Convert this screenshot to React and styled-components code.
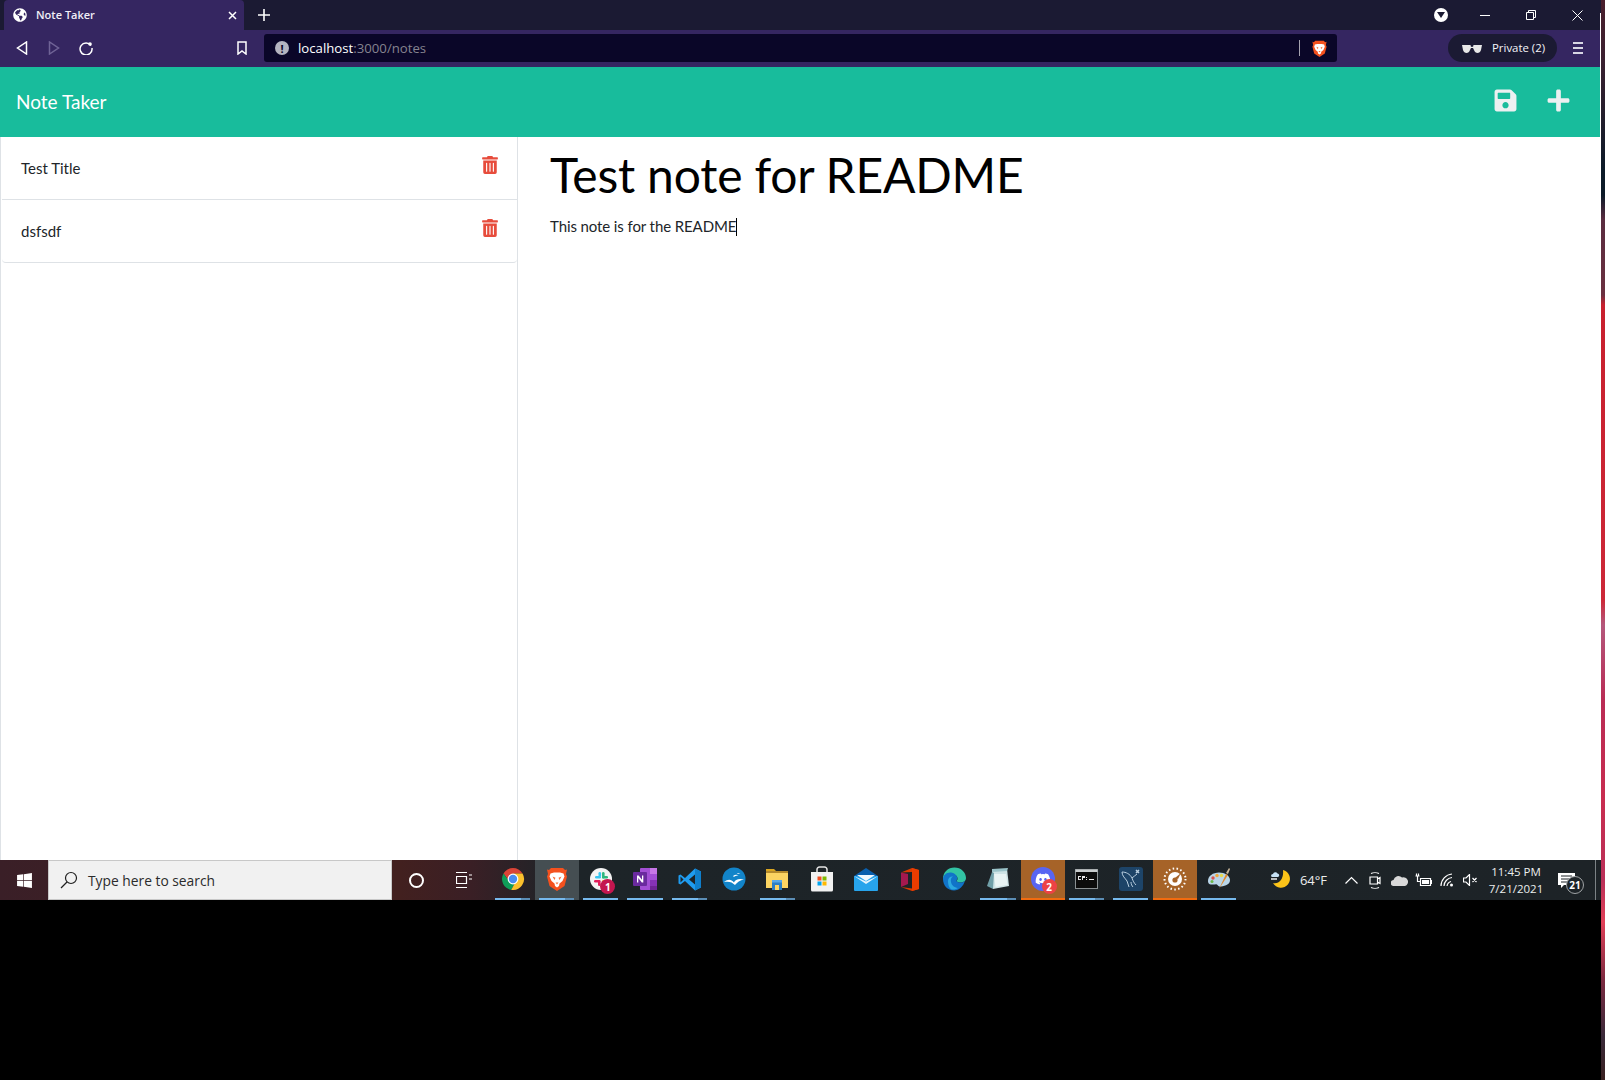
import styled, { createGlobalStyle } from 'styled-components';
import { FaSave, FaPlus, FaTrashAlt, FaGlobeAmericas, FaDiscord, FaWindows } from 'react-icons/fa';

const GlobalStyle = createGlobalStyle`
  html, body {
    margin: 0;
    padding: 0;
    height: 1080px;
    overflow: hidden;
    background: #000;
    font-family: Lato, "Open Sans", sans-serif;
  }
`;

const notes = [
  { id: 1, title: 'Test Title' },
  { id: 2, title: 'dsfsdf' },
];

const ChromeIcon = () => (
  <svg width="24" height="24" viewBox="0 0 24 24">
    <path d="M2.5 6.5A11 11 0 0 1 21.5 6.5L12 6.5 8 14z" fill="#db4437" />
    <path d="M2.5 6.5A11 11 0 0 0 10.2 22.9L15 14 8 14z" fill="#0f9d58" />
    <path d="M21.5 6.5A11 11 0 0 1 10.2 22.9L15.5 13 12 6.5z" fill="#fbc02d" />
    <circle cx="12" cy="12" r="5.4" fill="#fff" />
    <circle cx="12" cy="12" r="4.2" fill="#4a8cf0" />
  </svg>
);

const BraveIcon = ({ size = 24 }) => (
  <svg width={size} height={size} viewBox="0 0 24 24">
    <path d="M6 1h12l2 2 2-.5L21 7l1 2.500-2.500 9.500L12 24l-7.500-5L2 9.500 3 7 2 2.500 4 3z" fill="#f4511e" />
    <path d="M5.500 6.500L9 5.500h6l3.500 1 1 3-2 4.500-3 2.500L14 19l-2 1.500L10 19l-.5-2.500-3-2.500-2-4.500z" fill="#fff" />
    <path d="M7.500 9.500l3 1.200L9.500 13zM16.500 9.500l-3 1.200 1 2.300zM10.500 15.500h3L12 17.500z" fill="#f4703e" />
  </svg>
);

const SlackIcon = () => (
  <svg width="22" height="22" viewBox="0 0 22 22">
    <circle cx="11" cy="11" r="11" fill="#f3f3f3" />
    <rect x="5" y="8" width="6" height="2.600" rx="1.300" fill="#36c5f0" />
    <rect x="8.500" y="4" width="2.600" height="5" rx="1.300" fill="#36c5f0" />
    <rect x="12" y="4" width="2.600" height="6.500" rx="1.300" fill="#2eb67d" />
    <rect x="12" y="8" width="6" height="2.600" rx="1.300" fill="#2eb67d" />
    <rect x="4" y="12" width="6" height="2.600" rx="1.300" fill="#e01e5a" />
    <rect x="8" y="12" width="2.600" height="6" rx="1.300" fill="#e01e5a" />
    <rect x="12" y="12" width="5" height="2.600" rx="1.300" fill="#ecb22e" />
  </svg>
);

const OneNoteIcon = () => (
  <svg width="24" height="24" viewBox="0 0 24 24">
    <rect x="7" y="1" width="17" height="22" rx="1" fill="#a34fd6" />
    <rect x="17" y="1" width="7" height="6" fill="#c777e8" />
    <rect x="17" y="7" width="7" height="6" fill="#a34fd6" />
    <rect x="17" y="13" width="7" height="6" fill="#8632b5" />
    <rect x="17" y="19" width="7" height="4" fill="#6f2595" />
    <rect x="0" y="5" width="14" height="14" rx="1" fill="#6a2a9e" />
    <path d="M4 15.500v-7h1.600L9 12.700V8.500h1.300v7H8.800L5.300 11v4.500z" fill="#fff" />
  </svg>
);

const VsCodeIcon = () => (
  <svg width="24" height="25" viewBox="0 0 24 24">
    <path d="M17 1l6 3v16l-6 3L7 13.500 2.500 17 0.500 16v-8l2-1L7 10.500z" fill="#1f9cf0" />
    <path d="M17 7l-6 5 6 5z" fill="#1d2327" />
    <path d="M17 1l6 3v16l-6 3z" fill="#0f7fcc" />
    <path d="M2.500 9v6l3-3z" fill="#1d2327" />
  </svg>
);

const OpenOfficeIcon = () => (
  <svg width="24" height="24" viewBox="0 0 24 24">
    <circle cx="12" cy="12" r="11.500" fill="#1284c9" />
    <path d="M2 15c4-3 7-3 10 .5 1-3 5-4.500 10-3-4 .5-7 3-9 5.500-3-3-6-4-11-3z" fill="#fff" />
    <path d="M11 9c2-1.500 4-1.500 5.500-.5-2 0-3.500 .5-4.500 1.500zM15 6.500c1.300-.8 2.500-.7 3.500 0-1.300 0-2 .2-3 .6z" fill="#fff" />
  </svg>
);

const ExplorerIcon = () => (
  <svg width="23" height="22" viewBox="0 0 23 22">
    <path d="M0 1h8l2 2h-10z" fill="#d9a520" />
    <rect x="0" y="3" width="22" height="17" fill="#b58a2c" />
    <rect x="0" y="5" width="22" height="15" fill="#fcd462" />
    <rect x="6" y="14" width="10" height="8" fill="#2c7fc4" />
    <rect x="9" y="17" width="4" height="5" fill="#fcd462" />
    <rect x="6" y="12" width="10" height="2.500" fill="#56a8e8" />
  </svg>
);

const StoreIcon = () => (
  <svg width="24" height="26" viewBox="0 0 24 26">
    <path d="M7 6V3.500A2.500 2.500 0 0 1 9.500 1h5A2.500 2.500 0 0 1 17 3.500V6" stroke="#e4e4e4" strokeWidth="1.500" fill="none" />
    <path d="M1 6h22v18a1.500 1.500 0 0 1-1.500 1.500h-19A1.500 1.500 0 0 1 1 24z" fill="#f2f2f2" />
    <rect x="7.500" y="10.500" width="4" height="4" fill="#f25022" />
    <rect x="12.500" y="10.500" width="4" height="4" fill="#7fba00" />
    <rect x="7.500" y="15.500" width="4" height="4" fill="#00a4ef" />
    <rect x="12.500" y="15.500" width="4" height="4" fill="#ffb900" />
  </svg>
);

const MailIcon = () => (
  <svg width="24" height="23" viewBox="0 0 24 23">
    <path d="M0 8L12 0l12 8v3H0z" fill="#0a5fad" />
    <rect x="0" y="8" width="24" height="15" rx="1" fill="#27a4ec" />
    <path d="M0 8l12 8 12-8-12 5.500z" fill="#e6f4fd" />
    <path d="M3 7h18l-9 6z" fill="#f2f9fe" />
  </svg>
);

const OfficeIcon = () => (
  <svg width="18" height="23" viewBox="0 0 18 23">
    <path d="M0 4.500L11 0l7 2v19l-7 2-11-4 11 1.500V4z" fill="#d83b01" />
    <path d="M0 4.500L7 6v10l-7 3z" fill="#a4194f" />
    <path d="M11 0l7 2v19l-7 2z" fill="#eb3c00" />
  </svg>
);

const EdgeIcon = () => (
  <svg width="24" height="24" viewBox="0 0 24 24">
    <path d="M1 12C1 5 6 .500 12.500 .500 19 .500 24 5.500 24 11c0 3-2.500 4.500-5.500 4.500-2.500 0-4-1-4-1.800 1-1 1.500-2 .5-4C13.500 7.500 10 7 7 9c-3 2-4 5-6 3z" fill="#32c3a4" />
    <path d="M1 12c0-4 4-7 8-6.500 3 .4 5.500 2.500 6 4.200 1 2-.5 3-.5 4 0 2 6 3 8.500 0-1.500 5-5.500 9.800-11 9.800C5.500 23.500 1 18.500 1 12z" fill="#1173c8" />
    <path d="M6 14c0-3 2.500-5 5-4.500-2 1-2.500 3-2 5.500.5 3 3 5.500 7 6-1 .8-4 2-6 1.500-3-1-4-5-4-8.500z" fill="#2ba8e0" />
  </svg>
);

const NotepadIcon = () => (
  <svg width="24" height="24" viewBox="0 0 24 24">
    <path d="M6 2h15l2 17-16 3z" fill="#cfe4e6" />
    <path d="M6 2l16-1-1 3-15 1z" fill="#9ac3c9" />
    <path d="M6 5L1 19l6 3 1-16z" fill="#6f9fa8" />
    <path d="M8 7h12l1.500 11-12 2z" fill="#e9f4f4" />
  </svg>
);

const DiscordIcon = () => (
  <DiscordDisc>
    <FaDiscord size={16} color="#fff" />
  </DiscordDisc>
);

const ConsoleIcon = () => (
  <svg width="23" height="20" viewBox="0 0 23 20">
    <rect x="0.500" y="0.500" width="22" height="19" fill="#0c0c0c" stroke="#8a9092" />
    <rect x="0.500" y="0.500" width="22" height="2.500" fill="#c8cccd" />
    <path d="M3 7h3v1H4v2h2v1H3zM7 7h3v2H8v2H7zM11 8h1v1h-1zM11 10h1v1h-1zM14 10h5v1h-5z" fill="#e8e8e8" />
  </svg>
);

const MysqlIcon = () => (
  <MysqlTile>
    <svg width="22" height="22" viewBox="0 0 22 22" fill="none" stroke="#b9cfe0" strokeWidth="1">
      <path d="M2 4c4 0 8 2 10 6 1 3 2 5 4 7" />
      <path d="M2 4c0 4 3 6 5 9 1 2 1 4 2 6" />
      <path d="M12 10c2-1 3-3 5-4M11 14c0 2 1 4 2 5" />
      <path d="M16 2l3 3M19 2l-3 3" strokeWidth="1.500" />
    </svg>
  </MysqlTile>
);

const OrangeAppIcon = () => (
  <svg width="24" height="24" viewBox="0 0 24 24">
    <circle cx="12" cy="12" r="10.500" fill="none" stroke="#fff" strokeWidth="2" strokeDasharray="1.500 2.400" />
    <circle cx="12" cy="12" r="7" fill="#fff" />
    <circle cx="12" cy="13" r="2.600" fill="#a66328" />
    <path d="M12 11l6-5-3 6z" fill="#a66328" />
  </svg>
);

const PaintIcon = () => (
  <svg width="24" height="24" viewBox="0 0 24 24">
    <path d="M1 14C1 9 6 5.500 12 5.500S23 9 23 13c0 4-4 6-9 6.500-2 .2-3-.5-3.500-1.500-.5-1.500-2.500-.5-5-.5C3 17.500 1 17 1 14z" fill="#b9d5e8" />
    <circle cx="6" cy="11" r="1.700" fill="#d9534f" />
    <circle cx="10" cy="8.500" r="1.700" fill="#f0a63a" />
    <circle cx="14.500" cy="8.500" r="1.700" fill="#e7d94a" />
    <circle cx="5" cy="14.500" r="1.500" fill="#6bb84a" />
    <path d="M12 22L19 7l2 1z" fill="#e08a2e" />
    <path d="M19 6l3-5 1 1-2 5z" fill="#c8b59a" />
  </svg>
);

const MoonIcon = () => (
  <svg width="22" height="22" viewBox="0 0 22 22">
    <path d="M13 1a9 9 0 1 1-10 13c6 1.500 11-4 10-13z" fill="#fcc419" />
    <path d="M1 7a2 2 0 0 1 2-2 2.500 2.500 0 0 1 4.500-.5A1.800 1.800 0 0 1 8 8H2.500A1.500 1.500 0 0 1 1 7z" fill="#c8e2f5" />
    <path d="M1 10h6" stroke="#f0f0f0" strokeWidth="1.500" />
  </svg>
);

const StrokeIcon = ({ w, h, children }) => (
  <svg width={w} height={h} viewBox={`0 0 ${w} ${h}`} fill="none" stroke="#fff" strokeWidth="1.200">
    {children}
  </svg>
);

const taskApps = [
  { id: 'chrome', Icon: ChromeIcon, line: 'stack' },
  { id: 'brave', Icon: BraveIcon, line: 'stack', tone: 'active' },
  { id: 'slack', Icon: SlackIcon, line: 'single', badge: { text: '1', color: '#c4164f' } },
  { id: 'onenote', Icon: OneNoteIcon, line: 'single' },
  { id: 'vscode', Icon: VsCodeIcon, line: 'stack' },
  { id: 'openoffice', Icon: OpenOfficeIcon },
  { id: 'explorer', Icon: ExplorerIcon, line: 'stack' },
  { id: 'store', Icon: StoreIcon },
  { id: 'mail', Icon: MailIcon },
  { id: 'office', Icon: OfficeIcon },
  { id: 'edge', Icon: EdgeIcon },
  { id: 'notepad', Icon: NotepadIcon, line: 'stack' },
  { id: 'discord', Icon: DiscordIcon, line: 'flash', tone: 'flash', badge: { text: '2', color: '#ed4245' } },
  { id: 'console', Icon: ConsoleIcon, line: 'stack' },
  { id: 'mysql', Icon: MysqlIcon, line: 'single' },
  { id: 'orange', Icon: OrangeAppIcon, line: 'flash', tone: 'flash' },
  { id: 'paint', Icon: PaintIcon, line: 'single' },
];

const App = () => (
  <>
    <GlobalStyle />
    <Desktop>
      <Window>
        <TabBar>
          <Tab>
            <FaGlobeAmericas size={14} color="#fff" />
            <TabTitle>Note Taker</TabTitle>
            <TabClose>
              <svg width="9" height="9" viewBox="0 0 9 9" stroke="#fff" strokeWidth="1.500">
                <path d="M1 1l7 7M8 1l-7 7" />
              </svg>
            </TabClose>
          </Tab>
          <NewTab>
            <svg width="12" height="12" viewBox="0 0 12 12" stroke="#fff" strokeWidth="1.600">
              <path d="M6 0v12M0 6h12" />
            </svg>
          </NewTab>
          <WindowControls>
            <TabSearch>
              <svg width="8" height="6" viewBox="0 0 8 6"><path d="M0 0h8L4 6z" fill="#1b1a33" /></svg>
            </TabSearch>
            <WindowButton>
              <svg width="10" height="1" viewBox="0 0 10 1"><path d="M0 .5h10" stroke="#fff" /></svg>
            </WindowButton>
            <WindowButton>
              <svg width="10" height="10" viewBox="0 0 10 10" fill="none" stroke="#fff">
                <path d="M.5 2.500h7v7h-7zM2.500 2.500v-2h7v7h-2" />
              </svg>
            </WindowButton>
            <WindowButton>
              <svg width="11" height="11" viewBox="0 0 11 11" stroke="#fff">
                <path d="M.5 .5l10 10M10.500 .5l-10 10" />
              </svg>
            </WindowButton>
          </WindowControls>
        </TabBar>

        <Toolbar>
          <NavButton>
            <svg width="12" height="14" viewBox="0 0 12 14" fill="none" stroke="#fff" strokeWidth="1.500">
              <path d="M10.500 1v12L1.500 7z" />
            </svg>
          </NavButton>
          <NavButton>
            <svg width="12" height="14" viewBox="0 0 12 14" fill="none" stroke="#6f6396" strokeWidth="1.500">
              <path d="M1.500 1v12l9-6z" />
            </svg>
          </NavButton>
          <NavButton>
            <svg width="14" height="14" viewBox="0 0 14 14" fill="none" stroke="#fff" strokeWidth="1.500">
              <path d="M12 4.500A6 6 0 1 0 13 7" />
              <circle cx="11" cy="3" r="1.800" fill="#fff" stroke="none" />
            </svg>
          </NavButton>
          <BookmarkButton>
            <svg width="10" height="14" viewBox="0 0 10 14" fill="none" stroke="#fff" strokeWidth="1.500">
              <path d="M1 1h8v12L5 10l-4 3z" />
            </svg>
          </BookmarkButton>
          <AddressBar>
            <InfoDot>!</InfoDot>
            <UrlText>
              <UrlHost>localhost</UrlHost>
              <UrlRest>:3000/notes</UrlRest>
            </UrlText>
            <AddressDivider />
            <BraveIcon size={17} />
          </AddressBar>
          <PrivatePill>
            <svg width="20" height="9" viewBox="0 0 20 9" fill="#e8e8e8">
              <path d="M0 1h8.500l.5 2c.5-.4 1.500-.4 2 0l.5-2H20l-1 5c-.5 2-2 3-3.500 3s-3-1-3.500-3l-1-2H9L8 6C7.500 8 6 9 4.500 9S1.500 8 1 6z" />
            </svg>
            <PrivateLabel>Private (2)</PrivateLabel>
          </PrivatePill>
          <MenuButton>
            <MenuBar />
            <MenuBar />
            <MenuBar />
          </MenuButton>
        </Toolbar>

        <Header>
          <Brand>Note Taker</Brand>
          <HeaderActions>
            <FaSave size={25} />
            <FaPlus size={25} />
          </HeaderActions>
        </Header>

        <Main>
          <Sidebar>
            {notes.map((note) => (
              <NoteRow key={note.id}>
                <NoteTitle>{note.title}</NoteTitle>
                <FaTrashAlt size={18} color="#e74c3c" />
              </NoteRow>
            ))}
          </Sidebar>
          <Editor>
            <EditorTitle>Test note for README</EditorTitle>
            <EditorBody>
              This note is for the README
              <Caret />
            </EditorBody>
          </Editor>
        </Main>

        <Taskbar>
          <StartButton>
            <FaWindows size={17} color="#fff" />
          </StartButton>
          <SearchBox>
            <svg width="18" height="18" viewBox="0 0 18 18" fill="none" stroke="#1f1f1f" strokeWidth="1.200">
              <circle cx="11" cy="7" r="5.500" />
              <path d="M7 11l-6 6" />
            </svg>
            <SearchText>Type here to search</SearchText>
          </SearchBox>
          <ShellButton>
            <CortanaRing />
          </ShellButton>
          <ShellButton>
            <svg width="16" height="16" viewBox="0 0 16 16" fill="none" stroke="#fff" strokeWidth="1.200">
              <path d="M0 .5h11M0 15.500h11M.5 4.500h10v7H.5zM13 3h3M13 7h3" />
            </svg>
          </ShellButton>
          <AppList>
            {taskApps.map(({ id, Icon, line, tone, badge }) => (
              <AppSlot key={id} $tone={tone}>
                <Icon />
                {badge && <AppBadge $color={badge.color}>{badge.text}</AppBadge>}
                {line && <AppLine $kind={line} />}
              </AppSlot>
            ))}
          </AppList>
          <Tray>
            <MoonSlot><MoonIcon /></MoonSlot>
            <TrayTemp>64°F</TrayTemp>
            <TrayItem $w={24}>
              <StrokeIcon w={13} h={8}><path d="M.5 7.500L6.500 1.500l6 6" /></StrokeIcon>
            </TrayItem>
            <TrayItem $w={24}>
              <StrokeIcon w={12} h={17}>
                <path d="M2 1.500c2-1 6-1 8 0M2 15.500c2 1 6 1 8 0M1 5h7.500v7H1zM8.500 7l2.500-1.500v6L8.500 10" />
              </StrokeIcon>
            </TrayItem>
            <TrayItem $w={24}>
              <svg width="17" height="11" viewBox="0 0 17 11">
                <path d="M3 11a3 3 0 0 1-.5-6A5 5 0 0 1 11 2.500 3.500 3.500 0 0 1 14 11z" fill="#d9d9d9" />
              </svg>
            </TrayItem>
            <TrayItem $w={24}>
              <StrokeIcon w={17} h={14}>
                <path d="M1.500 .5v2.500M3.500 .5v2.500M.5 3h4M2.500 3v5.500h3M5.500 5.500h10v7h-10zM16.500 7v4" />
                <rect x="7" y="7" width="7" height="4" fill="#fff" stroke="none" />
              </StrokeIcon>
            </TrayItem>
            <TrayItem $w={24}>
              <StrokeIcon w={15} h={14}>
                <path d="M1 13A12 12 0 0 1 12 1M4 13A9 9 0 0 1 12 4.500M7 13a5.500 5.500 0 0 1 4-4.500" />
                <circle cx="11.500" cy="12" r="1.500" fill="#fff" stroke="none" />
              </StrokeIcon>
            </TrayItem>
            <TrayItem $w={22}>
              <StrokeIcon w={15} h={12}>
                <path d="M.5 4h2.500L6.500 .5v11L3 8H.5zM9.500 4l4 4M13.500 4l-4 4" />
              </StrokeIcon>
            </TrayItem>
            <Clock>
              <span>11:45 PM</span>
              <span>7/21/2021</span>
            </Clock>
            <NotifyButton>
              <svg width="17" height="15" viewBox="0 0 17 15">
                <path d="M0 0h17v12H6l-3 3v-3H0z" fill="#fff" />
                <path d="M3 3h11M3 6h11M3 9h7" stroke="#1d2327" />
              </svg>
              <NotifyCount>21</NotifyCount>
            </NotifyButton>
            <ShowDesktop />
          </Tray>
        </Taskbar>
        <BlackBand />
      </Window>
      <WallpaperStrip />
    </Desktop>
  </>
);

export default App;

const Desktop = styled.div`
  display: flex;
  width: 1605px;
  height: 1080px;
`;
const Window = styled.div`
  display: flex;
  flex-direction: column;
  width: 1601px;
  height: 100%;
`;
const WallpaperStrip = styled.div`
  width: 4px;
  height: 100%;
  background: linear-gradient(
    to bottom,
    #4a1e2c 0,
    #3a2030 60px,
    #0c1a28 170px,
    #0c1a28 195px,
    #5a2c40 220px,
    #6a3040 295px,
    #c8202e 305px,
    #cc2838 600px,
    #b4587c 625px,
    #b92c55 700px,
    #c82d50 800px,
    #b93058 880px,
    #e04058 922px,
    #7a2a40 981px,
    #3a2a3a 1036px,
    #3a2020 1080px
  );
`;
const TabBar = styled.div`
  display: flex;
  align-items: flex-end;
  height: 30px;
  padding-left: 4px;
  background: linear-gradient(#fff, #fff) right 13px / 1px 17px no-repeat, #1b1a33;
`;
const Tab = styled.div`
  display: flex;
  align-items: center;
  width: 240px;
  height: 30px;
  padding: 0 5px 0 9px;
  box-sizing: border-box;
  background: #352661;
  border-radius: 4px 4px 0 0;
  color: #fff;
`;
const TabTitle = styled.span`
  margin-left: 9px;
  margin-bottom: 1px;
  font: 600 11px "Open Sans", sans-serif;
  color: #f0eef6;
`;
const TabClose = styled.span`
  display: flex;
  margin-left: auto;
  padding-right: 2px;
`;
const NewTab = styled.span`
  display: flex;
  align-items: center;
  height: 30px;
  margin-left: 14px;
`;
const WindowControls = styled.div`
  display: flex;
  align-items: center;
  height: 30px;
  margin-left: auto;
  padding-right: 1px;
`;
const TabSearch = styled.span`
  display: flex;
  align-items: center;
  justify-content: center;
  width: 14px;
  height: 14px;
  margin-right: 14px;
  background: #fff;
  border-radius: 50%;
`;
const WindowButton = styled.span`
  display: flex;
  align-items: center;
  justify-content: center;
  width: 46px;
  height: 30px;
`;
const Toolbar = styled.div`
  display: flex;
  align-items: center;
  height: 37px;
  padding: 0 0 1px 6px;
  box-sizing: border-box;
  background: #352661;
  box-shadow: inset -1px 0 0 #fff;
`;
const NavButton = styled.span`
  display: flex;
  align-items: center;
  justify-content: center;
  width: 32px;
`;
const BookmarkButton = styled(NavButton)`
  margin-left: 124px;
`;
const AddressBar = styled.div`
  display: flex;
  align-items: center;
  width: 1073px;
  height: 28px;
  margin-left: 6px;
  padding: 0 9px 0 11px;
  box-sizing: border-box;
  background: #0a0628;
  border-radius: 3px;
  font: 13.200px "Open Sans", sans-serif;
`;
const InfoDot = styled.span`
  display: flex;
  align-items: center;
  justify-content: center;
  width: 14px;
  height: 14px;
  margin-right: 9px;
  background: #b4b4c0;
  border-radius: 50%;
  color: #0a0628;
  font: 700 11px "Open Sans", sans-serif;
`;
const UrlText = styled.span`
  margin-bottom: 1px;
`;
const UrlHost = styled.span`
  color: #fff;
`;
const UrlRest = styled.span`
  color: #85838f;
`;
const AddressDivider = styled.span`
  width: 1px;
  height: 16px;
  margin-left: auto;
  margin-right: 11px;
  background: #a5a3b0;
`;
const PrivatePill = styled.div`
  display: flex;
  align-items: center;
  width: 109px;
  height: 28px;
  margin-left: 111px;
  padding-left: 14px;
  box-sizing: border-box;
  background: #1b1a33;
  border-radius: 14px;
`;
const PrivateLabel = styled.span`
  margin-left: 10px;
  margin-bottom: 1px;
  color: #f4f4f8;
  font: 11.400px "Open Sans", sans-serif;
`;
const MenuButton = styled.div`
  display: flex;
  flex-direction: column;
  gap: 3px;
  width: 10px;
  margin-left: 16px;
`;
const MenuBar = styled.span`
  display: block;
  height: 2px;
  background: #d8d6e4;
`;
const Header = styled.header`
  display: flex;
  align-items: center;
  justify-content: space-between;
  height: 70px;
  padding: 0 30px 0 16px;
  background: #18bc9c;
  box-shadow: inset -1px 0 0 #fff;
  color: #fff;
`;
const Brand = styled.h1`
  margin: 0 0 2px;
  font: 400 19px Lato, sans-serif;
`;
const HeaderActions = styled.div`
  display: flex;
  align-items: center;
  gap: 28.500px;
  padding-bottom: 3px;
  color: #ecf0f1;
`;
const Main = styled.main`
  display: flex;
  flex: 1;
  min-height: 0;
  background: #fff;
`;
const Sidebar = styled.aside`
  width: 518px;
  padding-left: 1px;
  box-sizing: border-box;
  border-left: 1px solid #dee2e6;
  border-right: 1px solid #dee2e6;
`;
const NoteRow = styled.div`
  display: flex;
  align-items: flex-start;
  justify-content: space-between;
  height: 63px;
  padding: 19px 18px 0 19px;
  box-sizing: border-box;
  border-bottom: 1px solid #dee2e6;
  &:last-child {
    border-radius: 0 0 4px 4px;
  }
`;
const NoteTitle = styled.span`
  color: #212529;
  font: 15px/24px Lato, sans-serif;
`;
const Editor = styled.section`
  flex: 1;
  padding: 0 32px;
`;
const EditorTitle = styled.h2`
  margin: 9px 0 0;
  color: #000;
  letter-spacing: -0.2px;
  font: 400 48px/58px Lato, sans-serif;
`;
const EditorBody = styled.p`
  margin: 10px 0 0;
  color: #212529;
  letter-spacing: -0.1px;
  font: 15px/24px Lato, sans-serif;
`;
const Caret = styled.span`
  display: inline-block;
  width: 1px;
  height: 18px;
  vertical-align: -4px;
  background: #000;
`;
const Taskbar = styled.footer`
  display: flex;
  height: 40px;
  background: linear-gradient(to right, #3a1f27 0, #42201f 400px, #3a1f25 470px, #1d2428 560px, #1d2327 100%);
  color: #fff;
`;
const StartButton = styled.div`
  display: flex;
  align-items: center;
  justify-content: center;
  width: 48px;
`;
const SearchBox = styled.div`
  display: flex;
  align-items: center;
  width: 344px;
  padding-left: 11px;
  box-sizing: border-box;
  background: #f1f1f1;
  border: 1px solid #c8c8c8;
`;
const SearchText = styled.span`
  margin-left: 10px;
  color: #2b2b2b;
  font: 13.800px "Open Sans", sans-serif;
`;
const ShellButton = styled.div`
  display: flex;
  align-items: center;
  justify-content: center;
  width: 48px;
`;
const CortanaRing = styled.span`
  width: 11px;
  height: 11px;
  border: 2.500px solid #fff;
  border-radius: 50%;
`;
const AppList = styled.div`
  display: flex;
  margin-left: 3px;
`;
const AppSlot = styled.div`
  position: relative;
  display: flex;
  align-items: center;
  justify-content: center;
  width: 44.130px;
  padding-bottom: 2px;
  box-sizing: border-box;
  background: ${({ $tone }) =>
    $tone === 'active' ? '#454e52' : $tone === 'flash' ? '#a66328' : 'transparent'};
`;
const AppLine = styled.span`
  position: absolute;
  bottom: 0;
  height: 2px;
  left: ${({ $kind }) => ($kind === 'flash' ? '0' : '4px')};
  right: ${({ $kind }) => ($kind === 'flash' ? '0' : '5px')};
  background: ${({ $kind }) =>
    $kind === 'flash'
      ? '#f26b0f'
      : $kind === 'stack'
        ? 'linear-gradient(to right, #76b9ed 75%, #5b8db5 75%)'
        : '#76b9ed'};
`;
const AppBadge = styled.span`
  position: absolute;
  top: 19px;
  left: 21px;
  display: flex;
  align-items: center;
  justify-content: center;
  width: 15px;
  height: 15px;
  background: ${({ $color }) => $color};
  border-radius: 50%;
  color: #fff;
  font: 700 10px "Open Sans", sans-serif;
`;
const DiscordDisc = styled.span`
  display: flex;
  align-items: center;
  justify-content: center;
  width: 24px;
  height: 24px;
  background: #5865f2;
  border-radius: 50%;
`;
const MysqlTile = styled.span`
  display: flex;
  align-items: center;
  justify-content: center;
  width: 24px;
  height: 24px;
  background: #1d4468;
  border-radius: 3px;
`;
const Tray = styled.div`
  display: flex;
  align-items: center;
  margin-left: auto;
`;
const TrayItem = styled.span`
  display: flex;
  align-items: center;
  justify-content: center;
  width: ${({ $w }) => $w}px;
`;
const MoonSlot = styled(TrayItem)`
  width: 30px;
  padding-left: 4px;
  box-sizing: border-box;
`;
const TrayTemp = styled.span`
  width: 45px;
  padding-right: 6px;
  box-sizing: border-box;
  text-align: center;
  color: #eceeee;
  font: 13px "Open Sans", sans-serif;
`;
const Clock = styled.div`
  display: flex;
  flex-direction: column;
  align-items: center;
  gap: 2px;
  width: 66px;
  padding-left: 4px;
  box-sizing: border-box;
  color: #eceeee;
  font: 11.500px/15px "Open Sans", sans-serif;
`;
const NotifyButton = styled.div`
  position: relative;
  display: flex;
  align-items: center;
  justify-content: center;
  width: 38px;
  height: 40px;
  margin-right: 10px;
`;
const NotifyCount = styled.span`
  position: absolute;
  top: 16px;
  left: 19px;
  display: flex;
  align-items: center;
  justify-content: center;
  width: 16px;
  height: 16px;
  background: #1d2327;
  border: 1px solid #a0a4a6;
  border-radius: 50%;
  color: #fff;
  font: 700 10px "Open Sans", sans-serif;
`;
const ShowDesktop = styled.span`
  width: 1px;
  height: 40px;
  margin-right: 5px;
  background: #7c8285;
`;
const BlackBand = styled.div`
  height: 180px;
  background: #000;
`;
